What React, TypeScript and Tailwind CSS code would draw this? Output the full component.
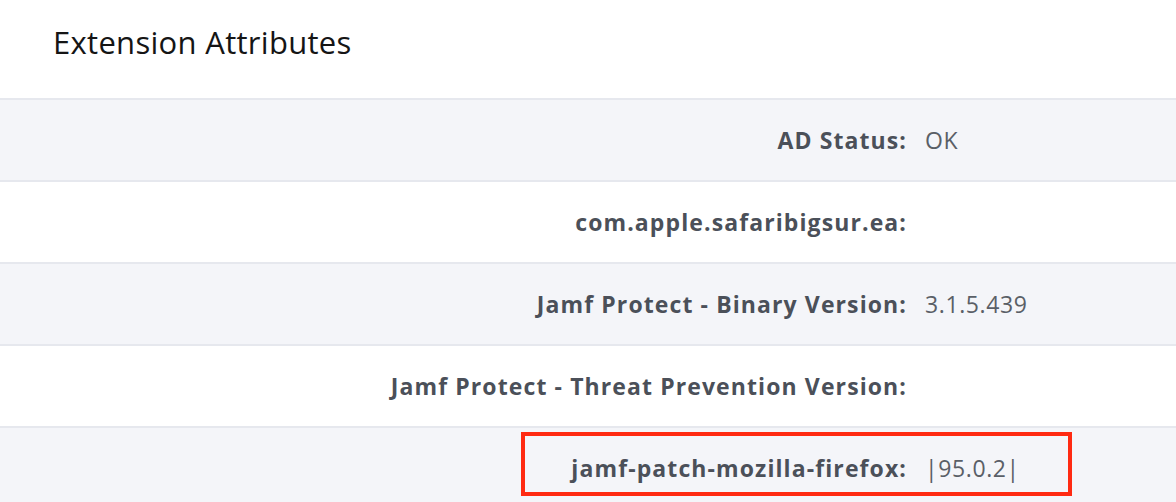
import React from "react";

const rows: { label: string; value: string }[] = [
  { label: "AD Status:", value: "OK" },
  { label: "com.apple.safaribigsur.ea:", value: "" },
  { label: "Jamf Protect - Binary Version:", value: "3.1.5.439" },
  { label: "Jamf Protect - Threat Prevention Version:", value: "" },
  { label: "jamf-patch-mozilla-firefox:", value: "|95.0.2|" },
];

export default function App() {
  return (
    <div
      className="w-[1176px] h-[502px] overflow-hidden bg-white"
      style={{ fontFamily: "'Open Sans', Lato, sans-serif" }}
    >
      <div className="h-[98px] flex items-center pl-[53px] pb-[14px]">
        <h2 className="text-[31px] leading-none text-[#151515] font-normal tracking-[0.3px]">
          Extension Attributes
        </h2>
      </div>
      {rows.map((r, i) => (
        <div
          key={i}
          className={`relative h-[82px] border-t-2 border-[#e6e8ee] flex items-center ${
            i % 2 === 0 ? "bg-[#f4f5f9]" : "bg-white"
          }`}
        >
          <div className="w-[907px] text-right text-[23px] font-bold text-[#4b5059] tracking-[1.1px]">
            {r.label}
          </div>
          <div className="pl-[18px] text-[23px] text-[#5a5f67] tracking-[0.6px]">{r.value}</div>
          {i === 4 && (
            <div className="absolute left-[521px] top-[4px] w-[551px] h-[64px] border-4 border-[#ff2a12]" />
          )}
        </div>
      ))}
    </div>
  );
}
